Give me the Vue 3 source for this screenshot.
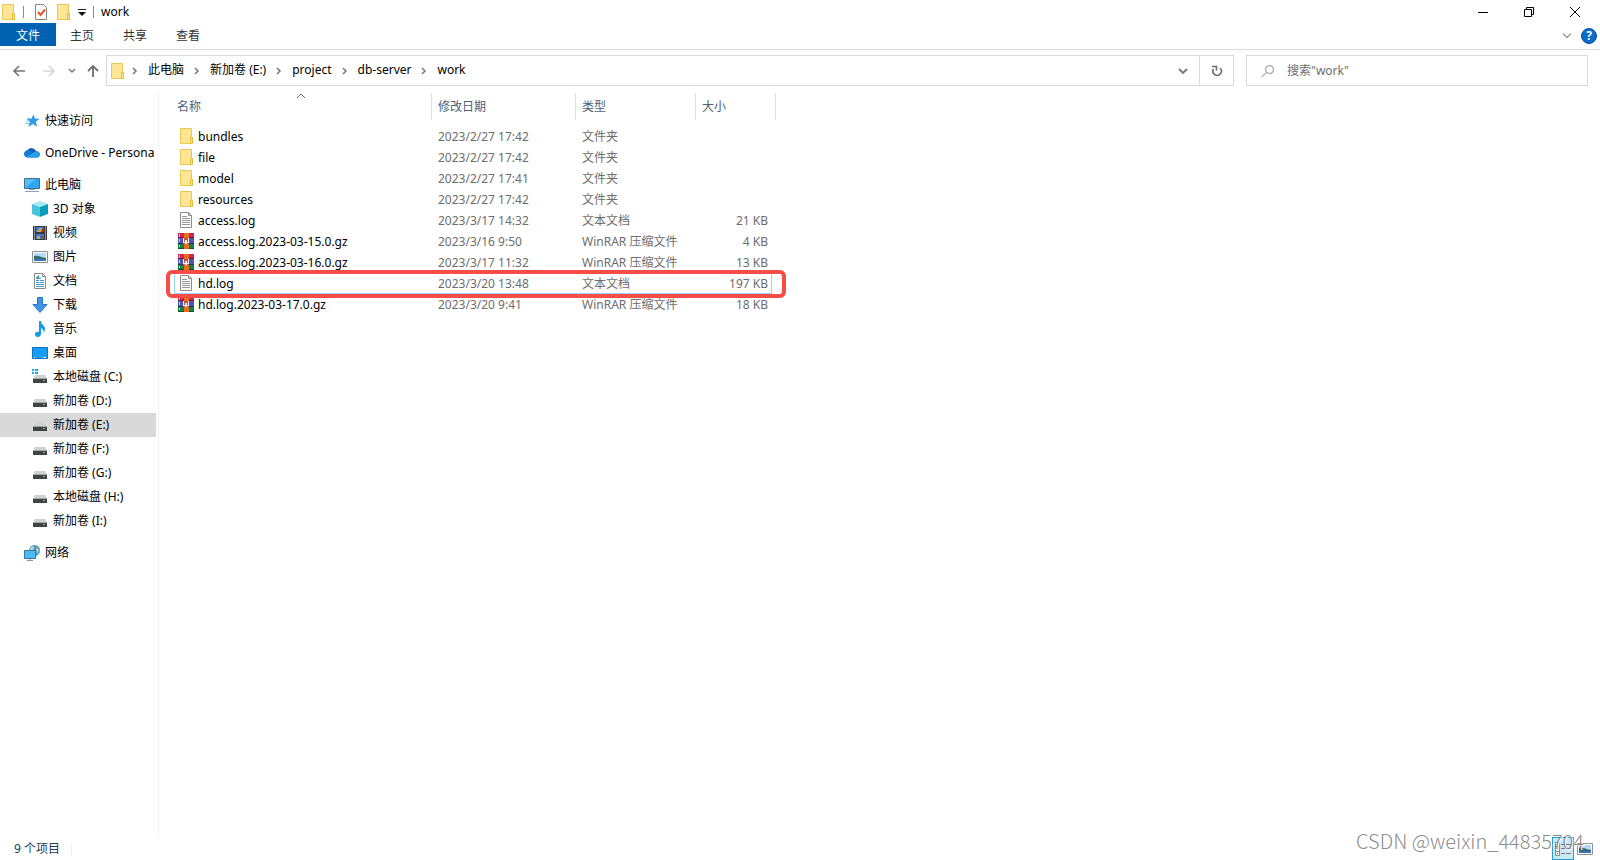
<script setup>
import { ref, h } from 'vue'

const tabs = ['文件', '主页', '共享', '查看']
const crumbs = ['此电脑', '新加卷 (E:)', 'project', 'db-server', 'work']
const query = ref('')

const navGroups = [
  [{ label: '快速访问', icon: 'star' }],
  [{ label: 'OneDrive - Persona', icon: 'cloud' }],
  [
    { label: '此电脑', icon: 'pc' },
    { label: '3D 对象', icon: 'cube', child: true },
    { label: '视频', icon: 'video', child: true },
    { label: '图片', icon: 'picture', child: true },
    { label: '文档', icon: 'document', child: true },
    { label: '下载', icon: 'download', child: true },
    { label: '音乐', icon: 'music', child: true },
    { label: '桌面', icon: 'desktop', child: true },
    { label: '本地磁盘 (C:)', icon: 'system', child: true },
    { label: '新加卷 (D:)', icon: 'drive', child: true },
    { label: '新加卷 (E:)', icon: 'drive', child: true, selected: true },
    { label: '新加卷 (F:)', icon: 'drive', child: true },
    { label: '新加卷 (G:)', icon: 'drive', child: true },
    { label: '本地磁盘 (H:)', icon: 'drive', child: true },
    { label: '新加卷 (I:)', icon: 'drive', child: true },
  ],
  [{ label: '网络', icon: 'network' }],
]

const files = [
  { name: 'bundles', date: '2023/2/27 17:42', type: '文件夹', size: '', icon: 'folder' },
  { name: 'file', date: '2023/2/27 17:42', type: '文件夹', size: '', icon: 'folder' },
  { name: 'model', date: '2023/2/27 17:41', type: '文件夹', size: '', icon: 'folder' },
  { name: 'resources', date: '2023/2/27 17:42', type: '文件夹', size: '', icon: 'folder' },
  { name: 'access.log', date: '2023/3/17 14:32', type: '文本文档', size: '21 KB', icon: 'text' },
  { name: 'access.log.2023-03-15.0.gz', date: '2023/3/16 9:50', type: 'WinRAR 压缩文件', size: '4 KB', icon: 'rar' },
  { name: 'access.log.2023-03-16.0.gz', date: '2023/3/17 11:32', type: 'WinRAR 压缩文件', size: '13 KB', icon: 'rar' },
  { name: 'hd.log', date: '2023/3/20 13:48', type: '文本文档', size: '197 KB', icon: 'text', marked: true },
  { name: 'hd.log.2023-03-17.0.gz', date: '2023/3/20 9:41', type: 'WinRAR 压缩文件', size: '18 KB', icon: 'rar' },
]

const drive = [
  ['path', { d: 'M3 6h10l2 4H1z', fill: '#cfd1d3' }],
  ['rect', { x: 1, y: 10, width: 14, height: 4, fill: '#3f4346' }],
  ['rect', { x: 1, y: 9, width: 14, height: 1, fill: '#a5a8aa' }],
  ['rect', { x: 11, y: 11, width: 2, height: 1, fill: '#4fe04a' }],
]

const shapes = {
  folder: [
    ['path', { d: 'M2.5.5h11v15h-11z', fill: '#ffe694', stroke: '#e9c750' }],
    ['path', { d: 'M12.5 9.5h2v6h-2z', fill: '#ffe694', stroke: '#e2bc3b' }],
  ],
  text: [
    ['path', { d: 'M2.5.5h8l3 3v12h-11z', fill: '#fff', stroke: '#8a8a8a' }],
    ['path', { d: 'M10.5.5v3h3', fill: 'none', stroke: '#8a8a8a' }],
    ['path', { d: 'M4 4.5h5M4 6.5h8M4 8.5h8M4 10.5h8M4 12.5h8', stroke: '#969696', fill: 'none' }],
  ],
  rar: [
    ['rect', { x: 0, y: 0, width: 16, height: 5, fill: '#cf2850' }],
    ['rect', { x: 0, y: 4, width: 16, height: 1, fill: '#7c1733' }],
    ['rect', { x: 0, y: 5, width: 16, height: 5, fill: '#4f55b5' }],
    ['rect', { x: 0, y: 10, width: 16, height: 1, fill: '#29306d' }],
    ['rect', { x: 0, y: 11, width: 16, height: 5, fill: '#12843e' }],
    ['rect', { x: 0, y: 15, width: 16, height: 1, fill: '#08552c' }],
    ['path', { d: 'M1 1h1v3H1zM1 6h1v3H1zM1 12h1v2H1z', fill: '#f4d04b' }],
    ['rect', { x: 6, y: 0, width: 5, height: 16, fill: '#ed6b20' }],
    ['rect', { x: 5, y: 5, width: 6, height: 6, fill: '#c2502a' }],
    ['path', { d: 'M5 5h1v4h1V7h2v2h1V5h1v5H9v1H7v-1H5z', fill: '#f7f0ed' }],
  ],
  star: [
    ['path', { d: 'M9.6 1.5 11 5.6l4.6.1-3.7 3 1.2 5-4.2-2.7-4.6 3 1.6-5L3 6l4.3-.2z', fill: '#2e9be6' }],
    ['path', { d: 'M2 8h4M1.5 10.5H6M3 5.5h3', stroke: '#7cc4f3', fill: 'none' }],
  ],
  cloud: [
    ['path', { d: 'M4 12.5a3.8 3.8 0 0 1-.6-7.3A5 5 0 0 1 12 6c2 0 4 1.3 4 3.3s-1.5 3.2-3 3.2z', fill: '#0b5fb8' }],
    ['path', { d: 'M0 9c0-2 1.5-3.8 4-3.8 2 0 3 .8 4.5 1.7L3 12.5C1 12 0 10.5 0 9z', fill: '#1479d2' }],
    ['path', { d: 'M2.5 12 11 6.5C14 6 16 7.5 16 9.6c0 1.7-1.4 2.900-3 2.900H4z', fill: '#27a2ea' }],
  ],
  pc: [
    ['path', { d: 'M.5 1.5h15v10H.5z', fill: '#56bdfa', stroke: '#41708f' }],
    ['path', { d: 'M1 11 12 2h3v9z', fill: '#2fa6f2' }],
    ['path', { d: 'M5 12.5h6M1 14.5h14', stroke: '#8ba2b2', fill: 'none' }],
  ],
  cube: [
    ['path', { d: 'm0 3 8-3 8 3-8 3z', fill: '#a3eaf1' }],
    ['path', { d: 'm0 3 8 3v10l-8-3z', fill: '#49c3d7' }],
    ['path', { d: 'm16 3-8 3v10l8-3z', fill: '#0b9dba' }],
  ],
  video: [
    ['path', { d: 'M1 1h14v14H1z', fill: '#393939' }],
    ['path', { d: 'M2.5 1.5v13M13.5 1.5v13', stroke: '#eee', 'stroke-dasharray': '1 1', fill: 'none' }],
    ['path', { d: 'M4 2h8v5H4zM4 9h8v5H4z', fill: '#3e79d0' }],
    ['path', { d: 'M7 3h3v2H9v2H5V5h2zM5 11h3v3H5z', fill: '#d1a537' }],
    ['path', { d: 'M10 3h2v4h-2zM9 11h2v2H9z', fill: '#8e432d' }],
  ],
  picture: [
    ['path', { d: 'M.5 2.5h15v11H.5z', fill: '#fff', stroke: '#919191' }],
    ['path', { d: 'M2 4h12v8H2z', fill: '#b5dcf6' }],
    ['path', { d: 'M2 7c4-1 6 1 12 2v2H2z', fill: '#346d70' }],
    ['path', { d: 'M2 10h12v2H2z', fill: '#3976b5' }],
  ],
  document: [
    ['path', { d: 'M2.5.5h8l3 3v12h-11z', fill: '#fff', stroke: '#898989' }],
    ['path', { d: 'M10.5.5v3h3', stroke: '#898989', fill: 'none' }],
    ['path', { d: 'M4 5.5h5M4 7.5h3M8 7.5h4M4 9.5h3M8 9.5h4M4 11.5h8M4 13.5h8', stroke: '#4595c6', fill: 'none' }],
    ['path', { d: 'M4 4.5 7 2v4z', fill: '#2f8fd0' }],
  ],
  download: [
    ['path', { d: 'M5.5.5h5v7H15l-7 8-7-8h4.500z', fill: '#3f96e4', stroke: '#2679c4' }],
  ],
  music: [
    ['path', { d: 'M7 0h2c0 4 4 4 4 8 0 2-1 3-1.5 4 .3-3-.8-4-2.5-5v5.5C9 17 3 17 3 13.5c0-2.5 2-3.2 4-2.5z', fill: '#149be8' }],
  ],
  desktop: [
    ['path', { d: 'M.5 2.5h15v11H.5z', fill: '#159df5', stroke: '#0874bd' }],
    ['path', { d: 'M2 12.5h1M10 12.5h1M12 12.5h2', stroke: '#fff', fill: 'none' }],
  ],
  system: [
    ...drive,
    ['path', { d: 'M0 0h2v2H0zM3 0h3v2H3zM0 3h2v2H0zM3 3h3v2H3z', fill: '#13ace8' }],
  ],
  drive,
  network: [
    ['circle', { cx: 10.5, cy: 5.5, r: 5.5, fill: '#4e96b4' }],
    ['path', { d: 'M7 2c3-2 4 0 2 3L5 6zM12 2l3 3-2 4z', fill: '#b7d9cf' }],
    ['path', { d: 'M.5 5.5h11v8H.5z', fill: '#4cbaf6', stroke: '#35769e' }],
    ['path', { d: 'M6 14v1.5M3 15.5h6', stroke: '#7e9cac', fill: 'none' }],
  ],
  task: [
    ['path', { d: 'M2.5.5h8l3 3v12h-11z', fill: '#fafafa', stroke: '#858585' }],
    ['path', { d: 'm5 8 2.5 3L12 5.5', stroke: '#e5562a', 'stroke-width': 2, fill: 'none' }],
  ],
}

function Glyph(props) {
  return h(
    'svg',
    { viewBox: '0 0 16 16', width: 16, height: 16, 'aria-hidden': 'true' },
    shapes[props.name].map(([tag, attrs]) => h(tag, attrs)),
  )
}
Glyph.props = ['name']
</script>

<template>
  <div class="window">
    <header class="titlebar">
      <Glyph name="folder" />
      <span class="rule"></span>
      <button class="quick" aria-label="属性"><Glyph name="task" /></button>
      <button class="quick" aria-label="新建文件夹"><Glyph name="folder" /></button>
      <button class="customize" aria-label="自定义快速访问工具栏">
        <svg width="8" height="8" viewBox="0 0 8 8"><path d="M0 1.5h8" stroke="#222" /><path d="M0 4h8L4 8z" fill="#111" /></svg>
      </button>
      <span class="rule last"></span>
      <h1>work</h1>
      <div class="controls">
        <button aria-label="最小化"><svg width="12" height="12"><path d="M1 6.5h10" stroke="#000" /></svg></button>
        <button aria-label="还原"><svg width="12" height="12"><path d="M1.5 3.5h7v7h-7zM3.5 3V1.5h7v7H9" fill="none" stroke="#000" /></svg></button>
        <button aria-label="关闭"><svg width="12" height="12"><path d="m1 1 10 10M11 1 1 11" stroke="#000" /></svg></button>
      </div>
    </header>

    <nav class="ribbon" aria-label="功能区">
      <button v-for="(tab, i) in tabs" :key="tab" class="tab" :class="{ file: i === 0 }">{{ tab }}</button>
      <div class="ribbon-end">
        <button aria-label="展开功能区"><svg width="10" height="6"><path d="m1 .5 4 4 4-4" fill="none" stroke="#9a9a9a" stroke-width="1.3" /></svg></button>
        <button class="help" aria-label="帮助">?</button>
      </div>
    </nav>

    <div class="location">
      <div class="history">
        <button aria-label="后退"><svg width="14" height="12"><path d="M13 6H2M7 1 2 6l5 5" fill="none" stroke="#717171" stroke-width="1.6" /></svg></button>
        <button aria-label="前进"><svg width="14" height="12"><path d="M1 6h11M7 1l5 5-5 5" fill="none" stroke="#d6d6d6" stroke-width="1.6" /></svg></button>
        <button class="recent" aria-label="最近浏览的位置"><svg width="8" height="6"><path d="m1 1 3 3 3-3" fill="none" stroke="#777" stroke-width="1.5" /></svg></button>
        <button class="up" aria-label="上移"><svg width="12" height="14"><path d="M6 13V2M1 7l5-5 5 5" fill="none" stroke="#717171" stroke-width="1.8" /></svg></button>
      </div>
      <div class="address">
        <Glyph name="folder" />
        <template v-for="crumb in crumbs" :key="crumb">
          <svg class="sep" width="6" height="8"><path d="m1 1 3 3-3 3" fill="none" stroke="#777" stroke-width="1.5" /></svg>
          <a href="#">{{ crumb }}</a>
        </template>
        <button class="drop" aria-label="以前的位置"><svg width="10" height="8"><path d="m1 2 4 4 4-4" fill="none" stroke="#777" stroke-width="1.8" /></svg></button>
        <button class="refresh" aria-label="刷新">
          <svg width="12" height="12"><path d="M9 3a4.200 4.200 0 1 1-6.500 1M1 1.500h4.500v4" fill="none" stroke="#6e6e6e" stroke-width="1.6" /></svg>
        </button>
      </div>
      <label class="search">
        <svg width="14" height="14"><circle cx="8.5" cy="5.5" r="4" fill="none" stroke="#8b8b8b" /><path d="M5.500 8.500.5 13" stroke="#8b8b8b" /></svg>
        <input v-model="query" type="text" aria-label="搜索" placeholder='搜索"work"' />
      </label>
    </div>

    <main class="body">
      <aside class="tree">
        <ul v-for="(group, g) in navGroups" :key="g">
          <li v-for="item in group" :key="item.label">
            <a href="#" :class="{ child: item.child, selected: item.selected }">
              <Glyph :name="item.icon" /><span>{{ item.label }}</span>
            </a>
          </li>
        </ul>
      </aside>

      <section class="listing">
        <table>
          <colgroup><col class="c-name" /><col class="c-date" /><col class="c-type" /><col class="c-size" /></colgroup>
          <thead>
            <tr>
              <th scope="col">
                <div>名称<svg class="sort" width="10" height="6"><path d="m1 5 4-4 4 4" fill="none" stroke="#666" /></svg></div>
              </th>
              <th scope="col"><div>修改日期</div></th>
              <th scope="col"><div>类型</div></th>
              <th scope="col"><div>大小</div></th>
            </tr>
          </thead>
          <tbody>
            <tr v-for="f in files" :key="f.name" :class="{ marked: f.marked }">
              <td class="name">
                <div><Glyph :name="f.icon" />{{ f.name }}</div>
                <template v-if="f.marked"><i class="focus"></i><i class="callout"></i></template>
              </td>
              <td>{{ f.date }}</td>
              <td>{{ f.type }}</td>
              <td class="size">{{ f.size }}</td>
            </tr>
          </tbody>
        </table>
      </section>
    </main>

    <footer class="status">
      <span class="count">9 个项目</span>
      <div class="views">
        <button class="details" aria-label="详细信息">
          <svg width="16" height="14"><path d="M.5.5h4v13h-4z" fill="#fff" stroke="#8a8a8a" /><path d="M.5 4.5h4M.5 9.5h4" stroke="#8a8a8a" /><path d="M6 2.5h4M11 2.5h5M6 6.5h4M11 6.5h5M6 11.5h4M11 11.5h5" stroke="#777" /><path d="M2 2h1v1H2z" fill="#555" /><path d="M2 6h1v2H2z" fill="#2c78d0" /><path d="M2 11h1v1H2z" fill="#d33" /></svg>
        </button>
        <button class="thumbs" aria-label="大图标"><Glyph name="picture" /></button>
      </div>
      <span class="watermark">CSDN @weixin_44835704</span>
    </footer>
  </div>
</template>

<style>
body {
  margin: 0;
  background: #fff;
}
</style>

<style scoped>
.window {
  display: flex;
  flex-direction: column;
  min-height: 100vh;
  overflow: hidden;
  font: 12px/20px "Noto Sans", "Noto Sans CJK SC", sans-serif;
  color: #000;
}
.window *,
.window {
  box-sizing: border-box;
}
svg {
  display: block;
  flex: none;
}
button {
  display: flex;
  align-items: center;
  justify-content: center;
  margin: 0;
  padding: 0;
  border: 0;
  background: none;
  font: inherit;
  color: inherit;
}
a {
  color: inherit;
  text-decoration: none;
}

.titlebar {
  display: flex;
  align-items: center;
  height: 23px;
}
.titlebar .rule {
  width: 1px;
  height: 12px;
  margin: 0 6px 0 7px;
  background: #8c8c8c;
}
.titlebar .last {
  margin: 0 7px 0 3px;
}
.quick {
  width: 22px;
  height: 22px;
}
.customize {
  width: 16px;
  height: 22px;
}
h1 {
  margin: 0;
  font: inherit;
}
.controls {
  display: flex;
  margin-left: auto;
  padding-right: 2px;
}
.controls button {
  width: 46px;
  height: 21px;
}

.ribbon {
  display: flex;
  gap: 1px;
  height: 27px;
  padding-bottom: 3px;
  border-bottom: 1px solid #dadbdc;
}
.tab {
  height: 23px;
  padding: 2px 14px 0;
  color: #333;
}
.tab.file {
  padding: 2px 16px 0;
  margin-right: -1px;
  background: #0063b1;
  color: #fff;
}
.ribbon-end {
  display: flex;
  align-items: center;
  gap: 9px;
  margin-left: auto;
  padding: 3px 3px 0 0;
}
.help {
  width: 16px;
  height: 16px;
  border: 1px solid #0a4f95;
  border-radius: 50%;
  background: #0a6ccd;
  color: #fff;
  font-weight: 700;
  line-height: 14px;
}

.location {
  display: flex;
  padding: 5px 12px 0;
}
.history {
  display: flex;
  width: 94px;
  height: 31px;
}
.history button {
  width: 14px;
  margin-right: 16px;
}
.history .recent {
  width: 8px;
  margin: 0 11px 0 -4px;
}
.history .up {
  width: 12px;
  margin: 0;
}
.address {
  display: flex;
  flex: 1;
  align-items: center;
  height: 31px;
  padding-left: 2px;
  border: 1px solid #d9d9d9;
}
.address a {
  margin-top: -2px;
}
.address .sep {
  margin: 0 10px;
}
.address .sep:nth-of-type(2) {
  margin-left: 7px;
}
.drop {
  width: 32px;
  height: 29px;
  margin-left: auto;
}
.refresh {
  width: 34px;
  height: 29px;
  border-left: 1px solid #d9d9d9;
}
.search {
  display: flex;
  align-items: center;
  gap: 12px;
  width: 342px;
  height: 31px;
  margin-left: 12px;
  padding-left: 14px;
  border: 1px solid #d9d9d9;
}
.search input {
  flex: 1;
  min-width: 0;
  height: 24px;
  padding: 0;
  border: 0;
  outline: 0;
  background: none;
  font: inherit;
  color: #000;
}
.search input::placeholder {
  color: #6d6d6d;
  opacity: 1;
}

.body {
  display: flex;
  flex: 1;
  padding-top: 7px;
}
.tree {
  flex: none;
  width: 159px;
  padding: 16px 2px 0 0;
  border-right: 1px solid #f3f3f3;
}
.tree ul {
  margin: 0 0 8px;
  padding: 0;
  list-style: none;
}
.tree a {
  display: flex;
  align-items: center;
  gap: 5px;
  height: 24px;
  padding-left: 24px;
  overflow: hidden;
  white-space: nowrap;
}
.tree a.child {
  padding-left: 32px;
}
.tree a.selected {
  background: #d9d9d9;
}

.listing {
  flex: 1;
  padding-left: 15px;
}
table {
  width: 602px;
  table-layout: fixed;
  border-collapse: separate;
  border-spacing: 0;
}
.c-name {
  width: 258px;
}
.c-date {
  width: 144px;
}
.c-type {
  width: 120px;
}
.c-size {
  width: 80px;
}
th {
  padding: 0 0 6px;
  font-weight: 400;
  text-align: left;
  color: #4c607a;
}
th div {
  position: relative;
  height: 27px;
  padding-left: 6px;
  border-right: 1px solid #e2e2e2;
  line-height: 28px;
}
th:first-child div {
  padding-left: 3px;
}
.sort {
  position: absolute;
  top: 0;
  left: 122px;
}
td {
  height: 21px;
  padding: 0 0 0 6px;
  line-height: 21px;
  white-space: nowrap;
  color: #6d6d6d;
}
td.name {
  padding-left: 4px;
  color: #000;
}
td.name div {
  display: flex;
  align-items: center;
  gap: 4px;
}
td.name svg {
  margin-bottom: 1px;
}
td.size {
  padding: 0 8px 0 0;
  text-align: right;
}
.marked {
  position: relative;
}
.focus,
.callout {
  position: absolute;
  pointer-events: none;
}
.focus {
  inset: 0 4px 0 0;
  border: 1px solid #99d1ff;
}
.callout {
  inset: -3px -10px -4px -8px;
  z-index: 1;
  border: 4px solid #f84c47;
  border-radius: 6px;
}

.status {
  position: relative;
  display: flex;
  align-items: center;
  height: 23px;
}
.count {
  padding: 0 11px 0 14px;
  border-right: 1px solid #f0f0f0;
  line-height: 12px;
  color: #1e395b;
}
.views {
  display: flex;
  align-items: center;
  gap: 3px;
  margin-left: auto;
  padding-right: 7px;
}
.details {
  width: 22px;
  height: 23px;
  border: 1px solid #26a0da;
  background: #cbe8f6;
}
.watermark {
  position: absolute;
  right: 16px;
  bottom: 7px;
  font: 300 20px/24px "Noto Sans CJK SC", sans-serif;
  color: rgba(110, 110, 110, 0.8);
  text-shadow: 1px 1px 0 #fff;
  pointer-events: none;
}
</style>
